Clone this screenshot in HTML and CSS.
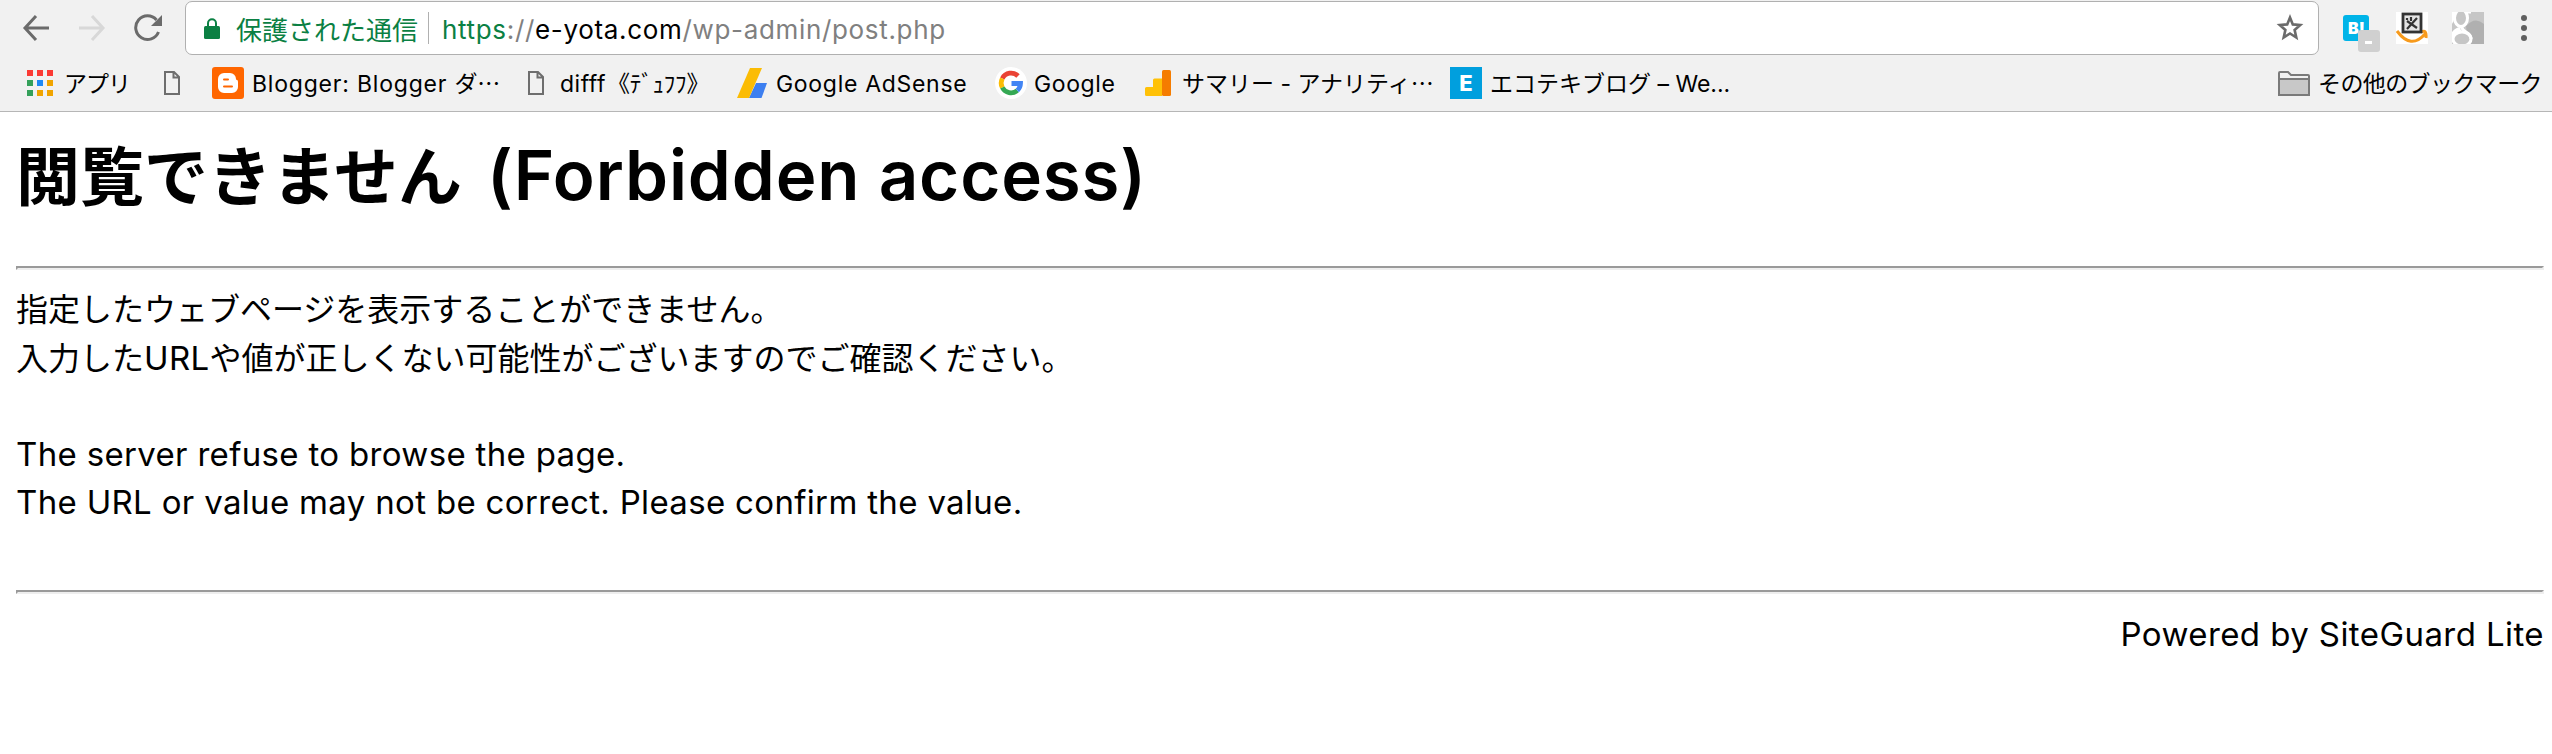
FILE: index.html
```html
<!DOCTYPE html>
<html lang="ja">
<head>
<meta charset="utf-8">
<title>閲覧できません (Forbidden access)</title>
<link rel="stylesheet" href="styles.css">
</head>
<body>
<header class="browser">
  <div class="toolbar">
    <div class="nav">
      <svg class="nav-icon" viewBox="0 0 28 28"><path d="M14 2 3 14 14 26M3 14H27" fill="none" stroke="#6b6b6b" stroke-width="3"/></svg>
      <svg class="nav-icon" viewBox="0 0 28 28"><path d="M14 2 25 14 14 26M25 14H1" fill="none" stroke="#d8d8d8" stroke-width="3"/></svg>
      <svg class="nav-icon" viewBox="0 0 28 28"><path d="M22.500 6A11.800 11.800 0 1 0 24.500 18" fill="none" stroke="#6b6b6b" stroke-width="3"/><path d="M28 1V12H17Z" fill="#6b6b6b"/></svg>
    </div>
    <div class="omnibox">
      <svg class="lock" viewBox="0 0 16 21"><rect y="8" width="16" height="13" rx="1.500" fill="#0b8043"/><path d="M4 9V5.200A4 4 0 0 1 12 5.200V9" fill="none" stroke="#0b8043" stroke-width="2"/></svg>
      <span class="secure">保護された通信</span>
      <span class="divider"></span>
      <span class="url"><span class="scheme">https</span>://<span class="host">e-yota.com</span>/wp-admin/post.php</span>
      <svg class="star" viewBox="0 0 28 28"><path d="M14 3.500 16.800 10.400 24.200 11 18.600 15.900 20.300 23.500 14 19.500 7.700 23.500 9.400 15.900 3.800 11 11.200 10.400Z" fill="none" stroke="#6b6b6b" stroke-width="2.600"/></svg>
    </div>
    <div class="extensions">
      <svg class="ext-hatena" viewBox="0 0 38 38"><rect width="26" height="26" rx="3" fill="#00b4e8"/><text x="5" y="19" class="ext-text">B!</text><rect x="15" y="15" width="22" height="22" rx="3" fill="#d0d0d0"/><rect x="22" y="26" width="7" height="3" fill="#fff"/></svg>
      <svg class="ext-kindle" viewBox="0 0 32 32"><rect width="32" height="32" fill="#fff"/><path d="M1 19Q15 38 29 22M25 20Q31 17 30 26" fill="none" stroke="#f79a1c" stroke-width="3"/><rect x="7" y="2" width="18" height="18" fill="#e4e4e4" stroke="#333" stroke-width="2.800"/><path d="M11 17 21 6M11 9 21 16M11 6v2M15 5v4" stroke="#333" stroke-width="2.200" fill="none"/></svg>
      <svg class="ext-google" viewBox="0 0 32 32"><rect width="32" height="32" fill="#c6c6c6"/><path d="M14 14Q23 4 32 12V32H16Z" fill="#b0b0b0"/><path d="M0 0H4Q2 9 0 12ZM0 20Q4 15 9 15Q7 18 12 20L14 22Q4 19 0 25Z" fill="#fff"/><ellipse cx="9" cy="6" rx="6.500" ry="8.500" fill="#c6c6c6" stroke="#fff" stroke-width="3"/><ellipse cx="10" cy="27" rx="9" ry="7" fill="#c6c6c6" stroke="#fff" stroke-width="3"/><path d="M13 0H19M10 14Q9 17 14 20T19 27" fill="none" stroke="#fff" stroke-width="3"/></svg>
      <svg class="menu" viewBox="0 0 6 28"><g fill="#5f5f5f"><circle cx="3" cy="4" r="3"/><circle cx="3" cy="14" r="3"/><circle cx="3" cy="24" r="3"/></g></svg>
    </div>
  </div>
  <nav class="bookmarks">
    <a class="bm bm-apps"><svg class="ico-apps" viewBox="0 0 26 26"><path fill="#fb3a34" d="M0 0h6v6H0zM10 0h6v6h-6zM20 0h6v6h-6z"/><path fill="#34a05a" d="M0 10h6v6H0zM0 20h6v6H0z"/><path fill="#1e88f5" d="M10 10h6v6h-6z"/><path fill="#f0a400" d="M20 10h6v6h-6zM10 20h6v6h-6zM20 20h6v6h-6z"/></svg><span class="label">アプリ</span></a>
    <a class="bm bm-page"><svg class="ico-page" viewBox="0 0 16 24"><path d="M1 1H10L15 6V23H1ZM9.500 1V6.500H15" fill="none" stroke="#6e6e6e" stroke-width="2"/></svg></a>
    <a class="bm bm-blogger"><svg class="ico" viewBox="0 0 32 32"><rect width="32" height="32" rx="3" fill="#f60"/><path d="M12 6h6a6 6 0 0 1 6 6q0 1 1 1t1 2v5a6 6 0 0 1-6 6h-8a6 6 0 0 1-6-6v-8a6 6 0 0 1 6-6z" fill="#fff"/><path d="M12 12.500h4M12 19.500h8" stroke="#f60" stroke-width="2" stroke-linecap="round"/></svg><span class="label">Blogger: Blogger <span class="kana">ダ⋯</span></span></a>
    <a class="bm bm-difff"><svg class="ico-page" viewBox="0 0 16 24"><path d="M1 1H10L15 6V23H1ZM9.500 1V6.500H15" fill="none" stroke="#6e6e6e" stroke-width="2"/></svg><span class="label">difff<span class="kana kana-half">《ﾃﾞｭﾌﾌ》</span></span></a>
    <a class="bm bm-adsense"><svg class="ico" viewBox="0 0 32 32"><path d="M20 16H31L25.500 31H13Z" fill="#3d7ff0"/><path d="M14 1H26L13 31H1Z" fill="#fbbc04"/></svg><span class="label label-latin">Google AdSense</span></a>
    <a class="bm bm-google"><svg class="ico" viewBox="0 0 32 32"><circle cx="16" cy="16" r="16" fill="#fff"/><g fill="none" stroke-width="4.800"><path d="M7.300 11.500A9.800 9.800 0 0 1 23 9" stroke="#ea4335"/><path d="M7.300 11.500A9.800 9.800 0 0 0 7.300 20.500" stroke="#fbbc05"/><path d="M7.300 20.500A9.800 9.800 0 0 0 22.300 23.500" stroke="#34a853"/><path d="M16.500 16.500H25.500A9.800 9.800 0 0 1 22.300 23.500" stroke="#4285f4"/></g></svg><span class="label label-latin">Google</span></a>
    <a class="bm bm-analytics"><svg class="ico-an" viewBox="0 0 26 26"><path d="M0 18.500q0-1.500 1.500-1.500H8V10q0-1.500 1.500-1.500H17V26H1.500Q0 26 0 24.500Z" fill="#ffc107"/><rect x="17" width="9" height="26" rx="1.500" fill="#f57c00"/></svg><span class="label">サマリー - アナリティ⋯</span></a>
    <a class="bm bm-eco"><span class="ico-e">E</span><span class="label">エコテキブログ – We...</span></a>
    <a class="bm bm-other"><svg class="ico-folder" viewBox="0 0 32 25"><path d="M1 24V2q0-1 1-1H10L13 4H30q1 0 1 1V24Z" fill="#f0f0f0" stroke="#7a7a7a" stroke-width="2"/><path d="M2 8H30V23H2Z" fill="#c8c8c8"/><path d="M1 8H31" stroke="#7a7a7a" stroke-width="2"/></svg><span class="label">その他のブックマーク</span></a>
  </nav>
</header>
<main class="page">
  <h1 class="title">閲覧できません<span class="title-latin">(Forbidden access)</span></h1>
  <hr class="rule">
  <div class="message">
    <p class="line">指定したウェブページを表示することができません。</p>
    <p class="line">入力した<span class="latin">URL</span>や値が正しくない可能性がございますのでご確認ください。</p>
    <p class="line line-en"><span class="latin">The server refuse to browse the page.</span></p>
    <p class="line"><span class="latin">The URL or value may not be correct. Please confirm the value.</span></p>
  </div>
  <hr class="rule">
  <p class="powered"><span class="latin">Powered by SiteGuard Lite</span></p>
</main>
</body>
</html>
```
FILE: styles.css
```css
* { box-sizing: border-box; }
body {
  margin: 0;
  background: #fff;
  color: #000;
  font-family: "Inter", "Noto Sans CJK JP", sans-serif;
}
.browser {
  height: 112px;
  background: #f1f1f1;
  border-bottom: 1px solid #b6b6b6;
}
.toolbar {
  display: flex;
  height: 56px;
  padding: 1px 0 1px 22px;
}
.nav {
  display: flex;
  flex: none;
  gap: 28px;
  width: 163px;
  padding-top: 13px;
}
.nav-icon { width: 28px; height: 28px; }
.omnibox {
  display: flex;
  flex: none;
  align-items: center;
  width: 2134px;
  height: 54px;
  padding: 0 14px 0 18px;
  background: #fff;
  border: 1px solid #b0b0b0;
  border-radius: 7px;
}
.lock { width: 16px; height: 21px; margin-right: 16px; }
.secure {
  color: #0b8043;
  font-size: 26px;
  white-space: nowrap;
}
.divider { width: 1px; height: 32px; margin: 0 13px 0 10px; background: #b0b0b0; }
.url { margin-top: 3px; color: #808080; font-size: 26px; letter-spacing: 0.67px; white-space: nowrap; }
.scheme { color: #0b8043; }
.host { color: #000; }
.star { width: 28px; height: 28px; margin-left: auto; }
.extensions { display: flex; flex: none; padding: 11px 0 0 24px; }
.ext-hatena { width: 38px; height: 38px; margin-top: 3px; }
.ext-text { fill: #fff; font: 900 16px "Inter", sans-serif; }
.ext-kindle { width: 32px; height: 32px; margin-left: 15px; }
.ext-google { width: 32px; height: 32px; margin-left: 24px; }
.menu { width: 6px; height: 28px; margin: 2px 0 0 37px; }
.bookmarks {
  display: flex;
  height: 55px;
  padding: 0 0 0 27px;
  font-size: 23px;
}
.bm { display: flex; flex: none; align-items: center; height: 54px; gap: 8px; white-space: nowrap; }
.bm-apps { width: 137px; gap: 11px; letter-spacing: -1px; }
.bm-page { width: 48px; }
.bm-blogger { width: 316px; letter-spacing: 0.8px; }
.bm-difff { width: 208px; gap: 16px; letter-spacing: 0.5px; }
.bm-adsense { width: 259px; letter-spacing: 0.7px; }
.bm-google { width: 150px; gap: 7px; letter-spacing: 0.6px; }
.bm-analytics { width: 305px; gap: 11px; }
.bm-other { margin-left: auto; padding-right: 10px; letter-spacing: -0.6px; }
.label { margin-top: -2px; }
.label-latin { margin-top: 2px; }
.kana { letter-spacing: -0.2px; }
.kana-half { margin-left: 1px; }
.ico { width: 32px; height: 32px; }
.ico-apps, .ico-an { width: 26px; height: 26px; }
.ico-page { width: 16px; height: 24px; }
.ico-folder { width: 32px; height: 25px; }
.ico-e {
  width: 32px;
  height: 32px;
  background: #009fde;
  color: #fff;
  font-size: 22px;
  font-weight: 800;
  line-height: 32px;
  text-align: center;
}
.page { padding: 0 8px 0 16px; }
.title { margin: 26px 0 54px; height: 74px; line-height: 74px; font-size: 64px; white-space: nowrap; }
.title-latin { font-size: 69px; font-weight: 600; letter-spacing: 0.85px; margin-left: 25px; }
.rule { margin: 0; height: 4px; border: 2px inset #eee; }
.message { height: 320px; padding-top: 16px; }
.line { margin: 0; height: 48px; line-height: 48px; font-size: 32px; white-space: nowrap; }
.line-en { margin-top: 48px; }
.latin { font-size: 33px; letter-spacing: 0.33px; }
.powered { margin: 16px 0 0; height: 48px; line-height: 48px; text-align: right; }
.powered .latin { letter-spacing: 0.42px; }
```
